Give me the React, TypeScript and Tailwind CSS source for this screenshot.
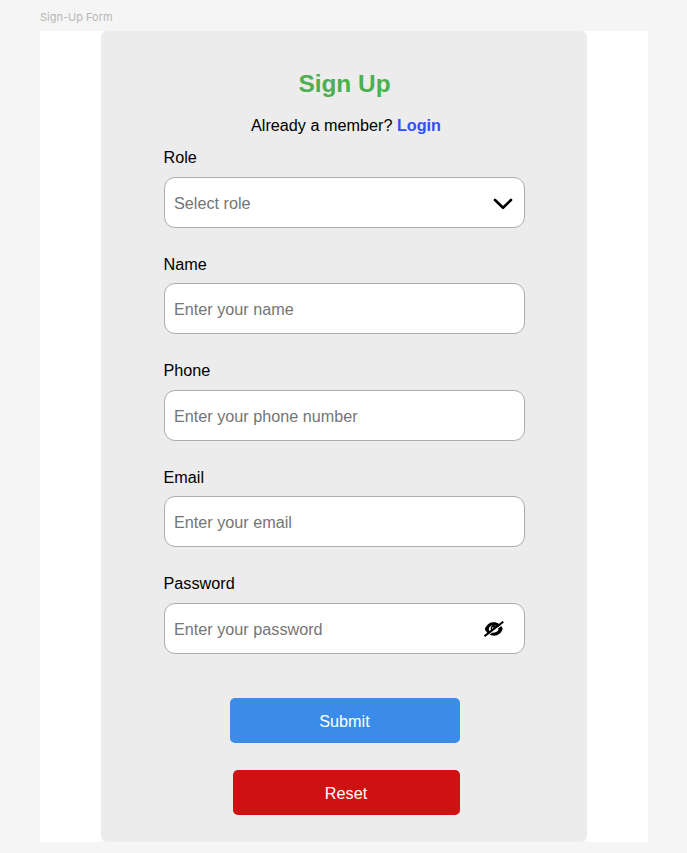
import React from "react";

const fields = [
  { label: "Role", hint: "Select role", icon: "chevron" },
  { label: "Name", hint: "Enter your name" },
  { label: "Phone", hint: "Enter your phone number" },
  { label: "Email", hint: "Enter your email" },
  { label: "Password", hint: "Enter your password", icon: "eye" },
];

function Chevron() {
  return (
    <svg className="mt-0.5 mr-[11px] h-3 w-5" viewBox="0 0 20 12" fill="none" stroke="black" strokeWidth="2.6" strokeLinecap="round" strokeLinejoin="round">
      <path d="M2 2 L10 9.8 L18 2" />
    </svg>
  );
}

function EyeOff() {
  return (
    <svg className="mr-5 h-4 w-5" viewBox="0 0 20 16">
      <path d="M0.8 8 C2.8 3.2 6.2 1.3 10 1.3 C13.8 1.3 17 3.4 18.7 8 C17 12.6 13.8 14.7 10 14.7 C6.2 14.7 2.8 12.8 0.8 8 Z" />
      <ellipse cx="9.6" cy="8" rx="4.8" ry="3.7" fill="white" />
      <path d="M7 9.6 C6.2 6.7 7.2 4 10.2 4 L12.8 5.3 L7.6 10 Z" />
      <path d="M8.2 8.2 C7.8 7.1 8.3 6.1 9.4 5.9 L9.5 7.2 Z" fill="white" />
      <path d="M1.6 16 L20 2.3" stroke="white" strokeWidth="1.1" />
      <path d="M0.5 15.2 L19.3 0.8" stroke="black" strokeWidth="2" />
    </svg>
  );
}

export default function App() {
  return (
    <div className="flex h-[853px] w-[687px] flex-col overflow-hidden bg-[#f5f5f5] pl-10 font-['Liberation_Sans',Arial,sans-serif] text-black">
      <div className="h-[31px] pt-[9px] font-[Inter,sans-serif] text-[11px] leading-4 text-[#b7b7b7]">Sign-Up Form</div>
      <main className="h-[811px] w-[608px] bg-white pl-[61px]">
        <form className="flex h-[811px] w-[486px] flex-col rounded-md bg-[#ececec] pl-[62.5px]">
          <h1 className="mt-[38px] h-[30px] w-[362px] text-center text-[24.4px] leading-[30px] font-bold text-[#4caf50]">Sign Up</h1>
          <p className="mt-4 w-[361px] pl-1 text-center text-[16.22px] leading-5">
            Already a member? <a className="font-bold text-[#304ffe]">Login</a>
          </p>
          <div className="mt-3 flex flex-col gap-9">
            {fields.map((f) => (
              <div key={f.label} className="flex h-[70.5px] flex-col">
                <label className="h-[19.5px] text-[16.22px] leading-5">{f.label}</label>
                <div className="mt-[10px] flex h-[51px] w-[361px] shrink-0 items-center justify-between rounded-[11px] border border-[#adadad] bg-white pt-px pl-[9.5px] text-[16.22px] text-[#757575]">
                  <span className="pt-px">{f.hint}</span>
                  {f.icon === "chevron" && <Chevron />}
                  {f.icon === "eye" && <EyeOff />}
                </div>
              </div>
            ))}
          </div>
          <button type="button" className="mt-[54px] ml-[66px] h-[45px] w-[230px] shrink-0 rounded-[5px] bg-[#3b8ce8] pt-0.5 text-[16.22px] text-white">Submit</button>
          <button type="button" className="mt-[27px] ml-[69px] h-[45px] w-[227px] shrink-0 rounded-[5px] bg-[#ce1111] pt-0.5 text-[16.22px] text-white">Reset</button>
        </form>
      </main>
    </div>
  );
}
